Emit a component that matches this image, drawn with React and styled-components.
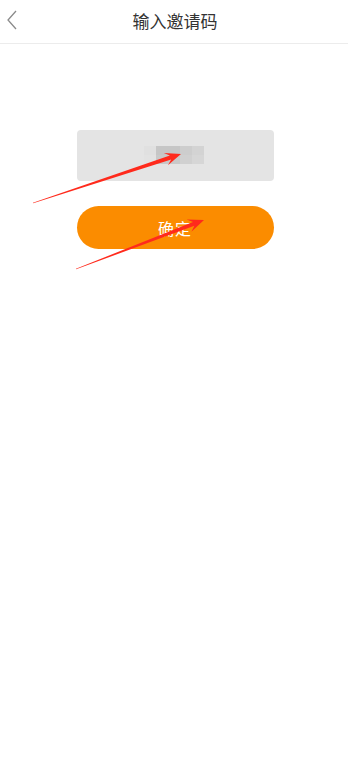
import React from "react";
import styled, { createGlobalStyle } from "styled-components";

const Global = createGlobalStyle`
  html, body { margin: 0; padding: 0; background: #fff; }
  body { font-family: "Noto Sans CJK SC", "Noto Sans", sans-serif; }
  #root { min-height: 766px; }
`;

const Page = styled.div`
  position: relative;
  width: 348px;
  height: 766px;
  background: #fff;
  overflow: hidden;
`;

const Header = styled.header`
  position: relative;
  height: 43px;
  border-bottom: 1px solid #ececec;
  display: flex;
  align-items: center;
  justify-content: center;
`;

const Back = styled.button`
  position: absolute;
  left: 4px;
  top: 8px;
  width: 16px;
  height: 24px;
  padding: 0;
  border: none;
  background: none;
  display: flex;
  align-items: center;
  justify-content: center;
`;

const Title = styled.h1`
  margin: 0 0 0 2px;
  font-size: 17px;
  font-weight: 400;
  color: #333;
  line-height: 1;
  transform: translateY(-1px);
`;

const Body = styled.main`
  display: flex;
  flex-direction: column;
  align-items: center;
  padding-top: 86px;
  padding-left: 2px;
  gap: 25px;
`;

const InputBox = styled.div`
  width: 197px;
  height: 51px;
  background: #e4e4e4;
  border-radius: 4px;
  display: flex;
  align-items: center;
  justify-content: center;
`;

const Mosaic = styled.div`
  display: flex;
  height: 18px;
  margin-left: -2px;
  margin-top: -2px;
`;

const Tile = styled.div`
  width: ${(p) => p.$w}px;
  display: flex;
  flex-direction: column;
`;

const Cell = styled.div`
  flex: 1;
  background: ${(p) => p.$c};
`;

const Button = styled.button`
  width: 197px;
  height: 43px;
  border: none;
  border-radius: 22px;
  background: #fb8c00;
  color: #fff;
  font-family: "Noto Sans CJK SC", sans-serif;
  font-size: 16px;
  font-weight: 400;
  letter-spacing: 1px;
  display: flex;
  align-items: center;
  justify-content: center;
`;

const Overlay = styled.svg`
  position: absolute;
  left: 0;
  top: 0;
  pointer-events: none;
`;

function arrowPoints(x1, y1, x2, y2) {
  const dx = x2 - x1;
  const dy = y2 - y1;
  const len = Math.hypot(dx, dy);
  const ux = dx / len;
  const uy = dy / len;
  const nx = -uy;
  const ny = ux;
  const headLen = 16;
  const headW = 6.5;
  const notch = 11;
  const shaftEnd = 2;
  const bx = x2 - ux * notch;
  const by = y2 - uy * notch;
  const hx = x2 - ux * headLen;
  const hy = y2 - uy * headLen;
  const pts = [
    [x1 + nx * 0.3, y1 + ny * 0.3],
    [bx + nx * shaftEnd, by + ny * shaftEnd],
    [hx + nx * headW, hy + ny * headW],
    [x2, y2],
    [hx - nx * headW, hy - ny * headW],
    [bx - nx * shaftEnd, by - ny * shaftEnd],
    [x1 - nx * 0.3, y1 - ny * 0.3],
  ];
  return pts.map((p) => p.map((v) => v.toFixed(1)).join(",")).join(" ");
}

export default function App() {
  return (
    <Page>
      <Global />
      <Header>
        <Back aria-label="返回">
          <svg width="12" height="20" viewBox="0 0 12 20">
            <path d="M10 1 L2 10 L10 19" fill="none" stroke="#8a8a8a" strokeWidth="1.3" />
          </svg>
        </Back>
        <Title>输入邀请码</Title>
      </Header>
      <Body>
        <InputBox>
          <Mosaic>
            <Tile $w={12}>
              <Cell $c="#e0e0e0" />
              <Cell $c="#e2e2e2" />
            </Tile>
            <Tile $w={24}>
              <Cell $c="#c6c6c6" />
              <Cell $c="#c9c9c9" />
            </Tile>
            <Tile $w={12}>
              <Cell $c="#cdcdcd" />
              <Cell $c="#d0d0d0" />
            </Tile>
            <Tile $w={12}>
              <Cell $c="#d3d3d3" />
              <Cell $c="#d6d6d6" />
            </Tile>
          </Mosaic>
        </InputBox>
        <Button>确定</Button>
      </Body>
      <Overlay width="348" height="766" viewBox="0 0 348 766">
        <polygon points={arrowPoints(33, 203, 181, 154)} fill="#ff2a1c" />
        <polygon points={arrowPoints(76, 269, 204, 220)} fill="#ff2a1c" />
      </Overlay>
    </Page>
  );
}
